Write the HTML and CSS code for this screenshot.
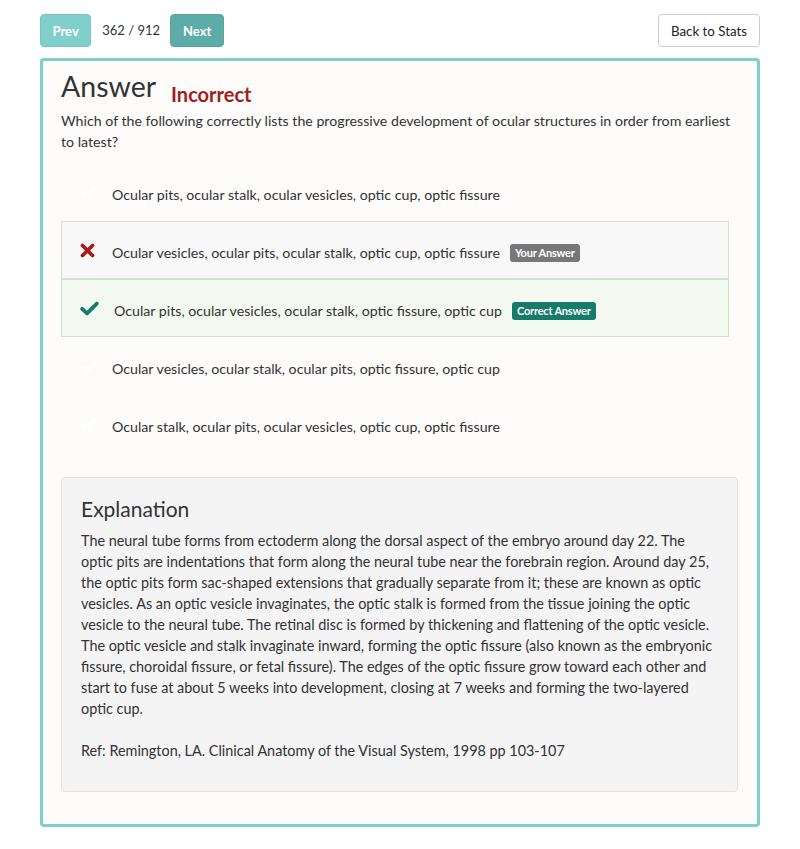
FILE: index.html
```html
<!DOCTYPE html>
<html>
<head>
<meta charset="utf-8">
<link rel="stylesheet" href="styles.css">
</head>
<body>
<div class="page">
  <div class="toolbar">
    <div class="nav">
      <button class="btn btn-prev">Prev</button>
      <span class="counter">362 / 912</span>
      <button class="btn btn-next">Next</button>
    </div>
    <button class="btn-back">Back to Stats</button>
  </div>

  <div class="panel">
    <div class="title-row">
      <h1 class="title">Answer</h1>
      <span class="status">Incorrect</span>
    </div>
    <p class="question">Which of the following correctly lists the progressive development of ocular structures in order from earliest to latest?</p>

    <ul class="options">
      <li class="option">
        <span class="icon"><svg width="18" height="14" viewBox="0 0 18 14"><polyline points="2,7.5 6.5,12 16,2.5" fill="none" stroke="#ffffff" stroke-width="3.6" stroke-linejoin="round"/></svg></span>
        <span class="text">Ocular pits, ocular stalk, ocular vesicles, optic cup, optic fissure</span>
      </li>
      <li class="option option-wrong">
        <span class="icon"><svg width="15" height="15" viewBox="0 0 15 15"><path d="M2.5 2.5 L12.5 12.5 M12.5 2.5 L2.5 12.5" stroke="#a31e1e" stroke-width="3.8" stroke-linecap="round"/></svg></span>
        <span class="text">Ocular vesicles, ocular pits, ocular stalk, optic cup, optic fissure</span>
        <span class="badge badge-yours">Your Answer</span>
      </li>
      <li class="option option-right">
        <span class="icon"><svg width="19" height="15" viewBox="0 0 19 15"><polyline points="2.2,7.8 7,12.4 16.8,2.6" fill="none" stroke="#177a6a" stroke-width="3.8" stroke-linejoin="round" stroke-linecap="round"/></svg></span>
        <span class="text">Ocular pits, ocular vesicles, ocular stalk, optic fissure, optic cup</span>
        <span class="badge badge-correct">Correct Answer</span>
      </li>
      <li class="option">
        <span class="icon"><svg width="18" height="14" viewBox="0 0 18 14"><polyline points="2,7.5 6.5,12 16,2.5" fill="none" stroke="#ffffff" stroke-width="3.6" stroke-linejoin="round"/></svg></span>
        <span class="text">Ocular vesicles, ocular stalk, ocular pits, optic fissure, optic cup</span>
      </li>
      <li class="option">
        <span class="icon"><svg width="18" height="14" viewBox="0 0 18 14"><polyline points="2,7.5 6.5,12 16,2.5" fill="none" stroke="#ffffff" stroke-width="3.6" stroke-linejoin="round"/></svg></span>
        <span class="text">Ocular stalk, ocular pits, ocular vesicles, optic cup, optic fissure</span>
      </li>
    </ul>

    <div class="explanation">
      <h2 class="exp-title">Explanation</h2>
      <p class="exp-text">The neural tube forms from ectoderm along the dorsal aspect of the embryo around day 22. The optic pits are indentations that form along the neural tube near the forebrain region. Around day 25, the optic pits form sac-shaped extensions that gradually separate from it; these are known as optic vesicles. As an optic vesicle invaginates, the optic stalk is formed from the tissue joining the optic vesicle to the neural tube. The retinal disc is formed by thickening and flattening of the optic vesicle. The optic vesicle and stalk invaginate inward, forming the optic fissure (also known as the embryonic fissure, choroidal fissure, or fetal fissure). The edges of the optic fissure grow toward each other and start to fuse at about 5 weeks into development, closing at 7 weeks and forming the two-layered optic cup.</p>
      <p class="exp-text">Ref: Remington, LA. Clinical Anatomy of the Visual System, 1998 pp 103-107</p>
    </div>
  </div>
</div>
</body>
</html>
```

FILE: styles.css
```css
* { box-sizing: border-box; }

html, body {
  margin: 0;
  padding: 0;
  background: #ffffff;
}

body {
  font-family: Lato, "Open Sans", sans-serif;
  color: #333333;
  font-size: 14.2px;
  line-height: 21px;
}

.page {
  width: 720px;
  margin: 0 40px;
  padding-top: 14px;
}

.toolbar {
  display: flex;
  justify-content: space-between;
  align-items: center;
  height: 33px;
}

.nav {
  display: flex;
  align-items: center;
  gap: 10px;
}

.btn {
  height: 33px;
  border: 1px solid transparent;
  border-radius: 4px;
  padding: 0 12px;
  font-family: Lato, sans-serif;
  font-weight: 700;
  font-size: 13px;
  color: #ffffff;
}

.btn-prev {
  background: #80cfcb;
  border-color: #76c5c1;
  padding: 0 11.5px;
}

.btn-next {
  background: #5eaca7;
  border-color: #57a39e;
}

.counter {
  margin-left: 1px;
  font-size: 13px;
  color: #333;
}

.btn-back {
  height: 33px;
  background: #ffffff;
  border: 1px solid #cccccc;
  border-radius: 4px;
  padding: 0 12px;
  font-family: Lato, sans-serif;
  font-size: 13.3px;
  color: #222;
}

.panel {
  margin-top: 11px;
  border: 3px solid #7ecfcb;
  border-radius: 4px;
  background: #fdfcfb;
  padding: 8px 19px 32px 18px;
}

.title-row {
  display: flex;
  align-items: flex-end;
  gap: 15px;
}

.title {
  margin: 0;
  font-size: 28.5px;
  line-height: 34px;
  font-weight: 400;
  color: #333;
}

.status {
  font-size: 20px;
  line-height: 18px;
  font-weight: 700;
  color: #a11c1c;
}

.question {
  margin: 7px 0 0 0;
}

.options {
  list-style: none;
  margin: 11px 9px 0 0;
  padding: 0;
}

.option {
  display: flex;
  align-items: center;
  height: 58px;
  padding: 5px 0 0 18px;
  border: 1px solid transparent;
}

.option-wrong {
  background: #f8f8f8;
  border-color: #dddddd;
}

.option-right {
  background: #f3f9f1;
  border-color: #c9e3c5;
}

.icon {
  display: flex;
  align-items: center;
  width: 32px;
  margin-top: -5px;
}

.option-right .icon {
  width: 34px;
}

.badge {
  margin-left: 10px;
  font-size: 11px;
  line-height: 18px;
  font-weight: 700;
  color: #ffffff;
  padding: 0 5px;
  border-radius: 3px;
  letter-spacing: -0.2px;
}

.badge-yours {
  background: #777777;
}

.badge-correct {
  background: #177b69;
}

.explanation {
  margin-top: 24px;
  background: #f4f4f4;
  border: 1px solid #e2e2e2;
  border-radius: 4px;
  padding: 19px 19px 30px 19px;
}

.exp-title {
  margin: 0;
  font-size: 21px;
  line-height: 24px;
  font-weight: 400;
  color: #333;
}

.exp-text {
  margin: 9px 0 0 0;
  font-size: 14.4px;
}

.exp-text + .exp-text {
  margin-top: 21px;
}
```
